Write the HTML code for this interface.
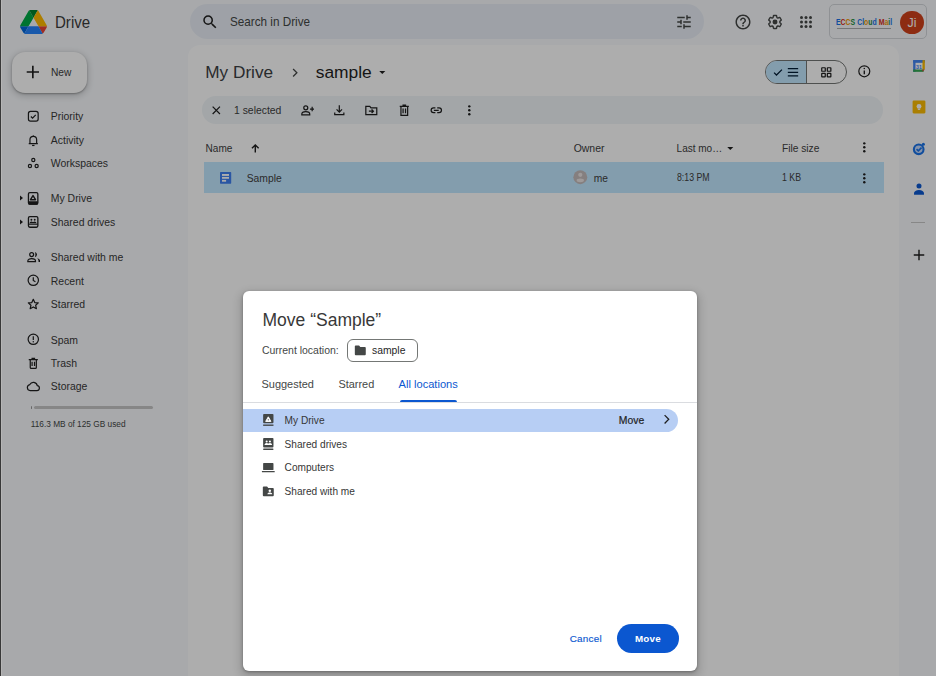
<!DOCTYPE html>
<html><head><meta charset="utf-8">
<style>
*{box-sizing:border-box;margin:0;padding:0}
html,body{width:936px;height:676px;overflow:hidden}
body{position:relative;background:#f8fafd;font-family:"Liberation Sans",sans-serif;color:#1f1f1f}
.a{position:absolute}
.t{position:absolute;white-space:nowrap}
svg{display:block}
.ic{position:absolute}
</style></head><body>

<!-- ===== DRIVE PAGE ===== -->
<div id="page" class="a" style="left:0;top:0;width:936px;height:676px">
  <!-- logo -->
  <svg class="ic" style="left:20px;top:10px" width="27" height="24" viewBox="0 0 87.3 78">
    <path d="m6.6 66.85 3.85 6.65c.8 1.4 1.950 2.5 3.3 3.3l13.75-23.8h-27.5c0 1.55.4 3.1 1.2 4.5z" fill="#0066da"/>
    <path d="m43.65 25-13.750-23.8c-1.35.8-2.5 1.9-3.3 3.3l-25.4 44a9.06 9.06 0 0 0 -1.2 4.5h27.5z" fill="#00ac47"/>
    <path d="m73.55 76.8c1.35-.8 2.5-1.9 3.3-3.3l1.6-2.75 7.65-13.25c.8-1.4 1.2-2.950 1.2-4.5h-27.502l5.852 11.5z" fill="#ea4335"/>
    <path d="m43.65 25 13.75-23.8c-1.35-.8-2.9-1.2-4.5-1.2h-18.5c-1.6 0-3.15.45-4.5 1.2z" fill="#00832d"/>
    <path d="m59.8 53h-32.3l-13.75 23.8c1.35.8 2.9 1.2 4.5 1.2h50.8c1.6 0 3.15-.45 4.5-1.2z" fill="#2684fc"/>
    <path d="m73.4 26.5-12.7-22c-.8-1.4-1.95-2.5-3.3-3.3l-13.75 23.8 16.150 28h27.45c0-1.55-.4-3.1-1.2-4.5z" fill="#ffba00"/>
  </svg>
  <div class="t" style="left:54.6px;top:10.6px;font-size:16.2px;line-height:22px;color:#3c3c3c;transform:scaleX(.93);transform-origin:0 0">Drive</div>

  <!-- search -->
  <div class="a" style="left:190px;top:4px;width:514px;height:35px;border-radius:18px;background:#e9eef6"></div>
  <svg class="ic" style="left:201px;top:13px" width="18" height="18" viewBox="0 0 24 24"><path fill="#1f1f1f" d="M15.5 14h-.79l-.28-.27A6.471 6.471 0 0 0 16 9.5 6.5 6.5 0 1 0 9.5 16c1.61 0 3.09-.59 4.23-1.570l.27.28v.79l5 4.99L20.490 19l-4.99-5zm-6 0C7.01 14 5 11.99 5 9.5S7.01 5 9.5 5 14 7.01 14 9.5 11.99 14 9.5 14z"/></svg>
  <div class="t" style="left:230.2px;top:15.1px;font-size:12.6px;line-height:15px;color:#444746;transform:scaleX(.93);transform-origin:0 0">Search in Drive</div>
  <svg class="ic" style="left:675px;top:13px" width="18" height="18" viewBox="0 0 24 24"><path fill="#444746" d="M3 17v2h6v-2H3zM3 5v2h10V5H3zm10 16v-2h8v-2h-8v-2h-2v6h2zM7 9v2H3v2h4v2h2V9H7zm14 4v-2H11v2h10zm-6-4h2V7h4V5h-4V3h-2v6z"/></svg>

  <!-- header right icons -->
  <svg class="ic" style="left:734px;top:13px" width="18" height="18" viewBox="0 0 24 24"><path fill="#444746" d="M11 18h2v-2h-2v2zm1-16C6.48 2 2 6.48 2 12s4.48 10 10 10 10-4.48 10-10S17.52 2 12 2zm0 18c-4.41 0-8-3.59-8-8s3.590-8 8-8 8 3.59 8 8-3.59 8-8 8zm0-14c-2.21 0-4 1.79-4 4h2c0-1.1.9-2 2-2s2 .9 2 2c0 2-3 1.75-3 5h2c0-2.25 3-2.5 3-5 0-2.21-1.79-4-4-4z"/></svg>
  <svg class="ic" style="left:766px;top:13px" width="18" height="18" viewBox="0 0 24 24"><path fill="none" stroke="#444746" stroke-width="2" stroke-linejoin="round" transform="translate(12 12) scale(.9) translate(-12 -12)" d="M19.14 12.94c.04-.3.06-.61.06-.94 0-.32-.02-.64-.07-.94l2.03-1.58a.49.49 0 0 0 .12-.61l-1.92-3.32a.488.488 0 0 0-.59-.22l-2.39.96c-.5-.38-1.03-.7-1.620-.94l-.36-2.54a.484.484 0 0 0-.48-.41h-3.84c-.24 0-.43.17-.47.41l-.36 2.54c-.59.24-1.13.57-1.62.94l-2.39-.96c-.22-.08-.47 0-.59.22L2.74 8.87c-.12.21-.08.47.12.61l2.03 1.58c-.05.3-.09.63-.09.94s.02.64.07.94l-2.03 1.58a.49.49 0 0 0-.12.61l1.92 3.32c.12.22.37.29.59.22l2.39-.96c.5.38 1.03.7 1.62.94l.36 2.54c.05.24.24.41.48.41h3.84c.24 0 .44-.17.47-.41l.36-2.54c.59-.24 1.13-.56 1.62-.94l2.39.96c.22.08.47 0 .59-.22l1.92-3.32c.12-.22.07-.47-.12-.61l-2.01-1.58z"/><circle cx="12" cy="12" r="3.3" fill="#444746"/></svg>
  <svg class="ic" style="left:797px;top:13px" width="18" height="18" viewBox="0 0 24 24"><g fill="#444746"><circle cx="6" cy="6" r="2"/><circle cx="12" cy="6" r="2"/><circle cx="18" cy="6" r="2"/><circle cx="6" cy="12" r="2"/><circle cx="12" cy="12" r="2"/><circle cx="18" cy="12" r="2"/><circle cx="6" cy="18" r="2"/><circle cx="12" cy="18" r="2"/><circle cx="18" cy="18" r="2"/></g></svg>

  <!-- account box -->
  <div class="a" style="left:829.3px;top:4.3px;width:98px;height:35px;border-radius:5px;border:1px solid #d3d6da;background:#f8fafd"></div>
  <div class="t" style="left:836px;top:16.1px;font-size:9.9px;line-height:11px;font-weight:700;transform:scaleX(0.70);transform-origin:0 0"><span style="color:#1a73e8">E</span><span style="color:#d93025">C</span><span style="color:#f29900">C</span><span style="color:#1e8e3e">S</span> <span style="color:#1a73e8">C</span><span style="color:#1a73e8">l</span><span style="color:#f29900">o</span><span style="color:#1e8e3e">u</span><span style="color:#1a73e8">d</span> <span style="color:#d93025">M</span><span style="color:#f29900">a</span><span style="color:#1e8e3e">i</span><span style="color:#1a73e8">l</span></div>
  <div class="a" style="left:836.5px;top:27.6px;width:54.5px;height:1.4px;background:#6d6d6d;opacity:.55"></div>
  <div class="a" style="left:900px;top:10.5px;width:23.6px;height:23.5px;border-radius:50%;background:#d0421b"></div>
  <div class="t" style="left:900px;top:16.3px;width:24px;text-align:center;font-size:12.4px;line-height:15px;color:#fff">Ji</div>

  <!-- New button -->
  <div class="a" style="left:12px;top:52px;width:75px;height:40.5px;border-radius:13px;background:#fff;box-shadow:0 1px 2px rgba(0,0,0,.3),0 2px 6px 2px rgba(0,0,0,.15)"></div>
  <svg class="ic" style="left:24px;top:63px" width="18" height="18" viewBox="24 63 18 18"><path d="M32.85 65.8v12.4M26.7 72h12.3" stroke="#1f1f1f" stroke-width="1.65"/></svg>
  <div class="t" style="left:51px;top:66px;font-size:10.2px;line-height:14px;color:#404040">New</div>

  <!-- nav -->
  <div id="nav">
  <svg class="ic" style="left:25.7px;top:109.1px" width="14.6" height="14.6" viewBox="0 0 24 24"><rect x="4" y="4" width="16" height="16" rx="3.5" fill="none" stroke="#1f1f1f" stroke-width="2"/><path d="M8 12.3l2.8 2.7 5.2-5.4" fill="none" stroke="#1f1f1f" stroke-width="2"/></svg>
  <div class="t" style="left:50.8px;top:110.4px;font-size:10.45px;line-height:14px;color:#383838">Priority</div>
  <svg class="ic" style="left:25.7px;top:132.7px" width="14.6" height="14.6" viewBox="0 0 24 24"><path d="M6.5 17.5V11a5.5 5.5 0 0 1 11 0v6.5M4.5 17.5h15" fill="none" stroke="#1f1f1f" stroke-width="2"/><path d="M10 20.5h4" fill="none" stroke="#1f1f1f" stroke-width="2"/><circle cx="12" cy="4.5" r="1" fill="#1f1f1f"/></svg>
  <div class="t" style="left:50.8px;top:134.0px;font-size:10.45px;line-height:14px;color:#383838">Activity</div>
  <svg class="ic" style="left:25.7px;top:155.9px" width="14.6" height="14.6" viewBox="0 0 24 24"><circle cx="12" cy="6.5" r="2.6" fill="none" stroke="#1f1f1f" stroke-width="2"/><circle cx="6.5" cy="16.5" r="2.6" fill="none" stroke="#1f1f1f" stroke-width="2"/><circle cx="17.5" cy="16.5" r="2.6" fill="none" stroke="#1f1f1f" stroke-width="2"/></svg>
  <div class="t" style="left:50.8px;top:157.2px;font-size:10.45px;line-height:14px;color:#383838">Workspaces</div>
  <svg class="ic" style="left:25px;top:188px" width="17" height="20" viewBox="25 188 17 20"><rect x="28.45" y="192.65" width="9.4" height="11.5" rx="1.4" fill="none" stroke="#1f1f1f" stroke-width="1.3"/><rect x="28.4" y="201.2" width="9.5" height="3.5" rx=".8" fill="#1f1f1f"/><path d="M33 195.6l2.5 4.1h-5z" fill="none" stroke="#1f1f1f" stroke-width="1.45" stroke-linejoin="round"/></svg>
  <div class="t" style="left:50.8px;top:192.4px;font-size:10.45px;line-height:14px;color:#383838">My Drive</div>
  <svg class="ic" style="left:18.5px;top:195.4px" width="5" height="6" viewBox="0 0 5 6"><path d="M1 0.5l3 2.5-3 2.5z" fill="#1f1f1f"/></svg>
  <svg class="ic" style="left:25px;top:212px" width="17" height="20" viewBox="25 212 17 20"><rect x="28.45" y="216.65" width="9.4" height="10.6" rx="1.4" fill="none" stroke="#1f1f1f" stroke-width="1.3"/><path d="M28.5 224.2h9.3" stroke="#1f1f1f" stroke-width="1.1"/><circle cx="31.4" cy="219.7" r=".95" fill="#1f1f1f"/><circle cx="34.7" cy="219.7" r=".95" fill="#1f1f1f"/><path d="M29.5 223.3a1.95 1.9 0 0 1 3.9 0zM32.6 223.3a1.95 1.9 0 0 1 3.9 0z" fill="#1f1f1f"/></svg>
  <div class="t" style="left:50.8px;top:215.9px;font-size:10.45px;line-height:14px;color:#383838">Shared drives</div>
  <svg class="ic" style="left:18.5px;top:218.9px" width="5" height="6" viewBox="0 0 5 6"><path d="M1 0.5l3 2.5-3 2.5z" fill="#1f1f1f"/></svg>
  <svg class="ic" style="left:25.7px;top:249.9px" width="14.6" height="14.6" viewBox="0 0 24 24"><circle cx="9.3" cy="7.6" r="3.2" fill="none" stroke="#1f1f1f" stroke-width="2"/><path d="M3 19.2v-1.1c0-2.3 2.9-4 6.3-4s6.3 1.7 6.3 4v1.1z" fill="none" stroke="#1f1f1f" stroke-width="2"/><path d="M14.6 3.3a4.4 4.4 0 0 1 0 8.6a12 12 0 0 0 0-8.6z" fill="#1f1f1f"/><path d="M18.2 13.6c2.9.8 5.1 2.4 5.1 4.7v1.6h-2.7v-1.6c0-1.9-1-3.4-2.4-4.7z" fill="#1f1f1f"/></svg>
  <div class="t" style="left:50.8px;top:251.2px;font-size:10.45px;line-height:14px;color:#383838">Shared with me</div>
  <svg class="ic" style="left:25.7px;top:273.2px" width="14.6" height="14.6" viewBox="0 0 24 24"><circle cx="12" cy="12" r="8.5" fill="none" stroke="#1f1f1f" stroke-width="2"/><path d="M12 7v5.3l3.5 2.2" fill="none" stroke="#1f1f1f" stroke-width="2"/></svg>
  <div class="t" style="left:50.8px;top:274.5px;font-size:10.45px;line-height:14px;color:#383838">Recent</div>
  <svg class="ic" style="left:25.7px;top:296.9px" width="14.6" height="14.6" viewBox="0 0 24 24"><path d="M12 3.8l2.4 5.3 5.8.6-4.3 3.9 1.2 5.7L12 16.4l-5.1 2.9 1.2-5.7-4.3-3.9 5.8-.6z" fill="none" stroke="#1f1f1f" stroke-width="2" stroke-linejoin="round"/></svg>
  <div class="t" style="left:50.8px;top:298.2px;font-size:10.45px;line-height:14px;color:#383838">Starred</div>
  <svg class="ic" style="left:25.7px;top:332.4px" width="14.6" height="14.6" viewBox="0 0 24 24"><circle cx="12" cy="12" r="8.5" fill="none" stroke="#1f1f1f" stroke-width="2"/><path d="M12 7v6" fill="none" stroke="#1f1f1f" stroke-width="2"/><circle cx="12" cy="16.2" r="1.2" fill="#1f1f1f"/></svg>
  <div class="t" style="left:50.8px;top:333.7px;font-size:10.45px;line-height:14px;color:#383838">Spam</div>
  <svg class="ic" style="left:25.7px;top:355.5px" width="14.6" height="14.6" viewBox="0 0 24 24"><path d="M4.5 6h15M9 4h6M7 6v13a1.5 1.5 0 0 0 1.5 1.5h7A1.5 1.5 0 0 0 17 19V6M10 9.5v7M14 9.5v7" fill="none" stroke="#1f1f1f" stroke-width="2"/></svg>
  <div class="t" style="left:50.8px;top:356.8px;font-size:10.45px;line-height:14px;color:#383838">Trash</div>
  <svg class="ic" style="left:25.7px;top:379.1px" width="14.6" height="14.6" viewBox="0 0 24 24"><path d="M7 19h11a4 4 0 0 0 .5-7.97A6.5 6.5 0 0 0 6.3 9.1 5 5 0 0 0 7 19z" fill="none" stroke="#1f1f1f" stroke-width="2" stroke-linejoin="round"/></svg>
  <div class="t" style="left:50.8px;top:380.4px;font-size:10.45px;line-height:14px;color:#383838">Storage</div>
  <div class="a" style="left:33.6px;top:405.6px;width:119.8px;height:3px;border-radius:1.5px;background:#c6c6c6"></div>
  <div class="a" style="left:30.8px;top:405.6px;width:1.4px;height:3px;border-radius:1px;background:#9a9a9a"></div>
  <div class="t" style="left:30.7px;top:418.4px;font-size:8.3px;line-height:12px;color:#444746">116.3 MB of 125 GB used</div>
  </div><!--/nav-->

  <!-- main panel -->
  <div class="a" style="left:188px;top:44.5px;width:710.5px;height:640px;border-radius:12px 12px 0 0;background:#fff"></div>
  <div class="t" style="left:205.3px;top:61px;font-size:17.2px;line-height:22px;color:#3c4043">My Drive</div>
  <svg class="ic" style="left:287.5px;top:64.5px" width="14.6" height="14.6" viewBox="0 0 24 24"><path d="M8.4 6.6l6.2 6.1-6.2 6.2" fill="none" stroke="#444746" stroke-width="2.1"/></svg>
  <div class="t" style="left:315.7px;top:61px;font-size:17.4px;line-height:22px;color:#1f1f1f">sample</div>
  <svg class="ic" style="left:375.2px;top:64.7px" width="14.6" height="14.6" viewBox="0 0 24 24"><path d="M7 10l5 5 5-5z" fill="#1f1f1f"/></svg>

  <!-- view toggle -->
  <div class="a" style="left:765.2px;top:60px;width:81.6px;height:23.7px;border-radius:12px;border:1px solid #747775;overflow:hidden">
    <div class="a" style="left:0;top:0;width:40.2px;height:100%;background:#c2e7ff"></div>
    <div class="a" style="left:40.2px;top:0;width:1px;height:100%;background:#747775"></div>
  </div>
  <svg class="ic" style="left:771px;top:64.5px" width="14.6" height="14.6" viewBox="0 0 24 24"><path d="M5 12.5l4 4 9-9" fill="none" stroke="#001d35" stroke-width="2"/></svg>
  <svg class="ic" style="left:786px;top:64.5px" width="14.6" height="14.6" viewBox="0 0 24 24"><path d="M3 6h17M3 12h17M3 18h17" fill="none" stroke="#001d35" stroke-width="2.2"/></svg>
  <svg class="ic" style="left:818.5px;top:64.7px" width="14.6" height="14.6" viewBox="0 0 24 24"><g fill="none" stroke="#1f1f1f" stroke-width="2"><rect x="4.5" y="4.5" width="5.8" height="5.8" rx=".6"/><rect x="13.7" y="4.5" width="5.8" height="5.8" rx=".6"/><rect x="4.5" y="13.7" width="5.8" height="5.8" rx=".6"/><rect x="13.7" y="13.7" width="5.8" height="5.8" rx=".6"/></g></svg>
  <svg class="ic" style="left:856.7px;top:64.3px" width="14.6" height="14.6" viewBox="0 0 24 24"><circle cx="12" cy="12" r="9" fill="none" stroke="#1f1f1f" stroke-width="2"/><path d="M12 10.5v6.5" stroke="#1f1f1f" stroke-width="2.2"/><circle cx="12" cy="7.5" r="1.3" fill="#1f1f1f"/></svg>

  <!-- selection toolbar -->
  <div class="a" style="left:202.2px;top:96.4px;width:681.3px;height:28px;border-radius:14px;background:#f0f5f8"></div>
  <svg class="ic" style="left:209px;top:103.1px" width="14.6" height="14.6" viewBox="0 0 24 24"><path d="M6 6l12 12M18 6L6 18" fill="none" stroke="#1f1f1f" stroke-width="2"/></svg>
  <div class="t" style="left:234px;top:103.8px;font-size:10.4px;line-height:14px;color:#404040">1 selected</div>
  <svg class="ic" style="left:299.7px;top:103.1px" width="14.6" height="14.6" viewBox="0 0 24 24"><g fill="none" stroke="#1f1f1f" stroke-width="2"><circle cx="9.5" cy="8" r="3.3"/><path d="M3 19.5v-1.3c0-2.4 2.9-4 6.5-4s6.5 1.6 6.5 4v1.3z"/><path d="M20 6.3v7.2M16.4 9.9h7.2"/></g></svg>
  <svg class="ic" style="left:332.1px;top:103.1px" width="14.6" height="14.6" viewBox="0 0 24 24"><g fill="none" stroke="#1f1f1f" stroke-width="2"><path d="M12 3.5v11M7.5 10.5l4.5 4.5 4.5-4.5"/><path d="M4.5 15.5v3.5h15v-3.5"/></g></svg>
  <svg class="ic" style="left:363.7px;top:103.1px" width="14.6" height="14.6" viewBox="0 0 24 24"><g fill="none" stroke="#1f1f1f" stroke-width="2"><path d="M3 5.5v13.5h18V8H11.5L9.5 5.5z"/><path d="M8 13.5h7M12.5 10.5l3 3-3 3"/></g></svg>
  <svg class="ic" style="left:396.7px;top:103.1px" width="14.6" height="14.6" viewBox="0 0 24 24"><g fill="none" stroke="#1f1f1f" stroke-width="2"><path d="M4.5 5.5h15M9 3.5h6M6.5 5.5v15h11v-15M10 9v8M14 9v8"/></g></svg>
  <svg class="ic" style="left:428.7px;top:103.1px" width="14.6" height="14.6" viewBox="0 0 24 24"><g fill="none" stroke="#1f1f1f" stroke-width="2"><path d="M10.5 8H7.5a4 4 0 0 0 0 8h3M13.5 8h3a4 4 0 0 1 0 8h-3M8 12h8"/></g></svg>
  <svg class="ic" style="left:461.8px;top:103.1px" width="14.6" height="14.6" viewBox="0 0 24 24"><g fill="#1f1f1f"><circle cx="12" cy="5.5" r="2"/><circle cx="12" cy="12" r="2"/><circle cx="12" cy="18.5" r="2"/></g></svg>

  <!-- table header -->
  <div class="t" style="left:205.6px;top:141.5px;font-size:10.05px;line-height:14px;color:#404040">Name</div>
  <svg class="ic" style="left:247.7px;top:140.7px" width="14.6" height="14.6" viewBox="0 0 24 24"><path d="M12 19V6.5M6.5 12L12 6.5l5.5 5.5" fill="none" stroke="#1f1f1f" stroke-width="2.3"/></svg>
  <div class="t" style="left:573.7px;top:141.5px;font-size:10.46px;line-height:14px;color:#404040">Owner</div>
  <div class="t" style="left:676.6px;top:141.5px;font-size:10.0px;line-height:14px;color:#404040">Last mo…</div>
  <svg class="ic" style="left:722.7px;top:140.7px" width="14.6" height="14.6" viewBox="0 0 24 24"><path d="M7 10l5 5 5-5z" fill="#1f1f1f"/></svg>
  <div class="t" style="left:781.9px;top:141.5px;font-size:10.22px;line-height:14px;color:#404040">File size</div>
  <svg class="ic" style="left:856.7px;top:140.2px" width="14.6" height="14.6" viewBox="0 0 24 24"><g fill="#1f1f1f"><circle cx="12" cy="5.5" r="2"/><circle cx="12" cy="12" r="2"/><circle cx="12" cy="18.5" r="2"/></g></svg>
  

  <!-- selected row -->
  <div class="a" style="left:204.2px;top:162px;width:679.6px;height:30.5px;background:#c2e7ff"></div>
  <svg class="ic" style="left:218px;top:170px" width="16" height="16" viewBox="218 170 16 16"><rect x="220" y="172.1" width="11.2" height="11.6" rx=".6" fill="#3f7ff0"/><rect x="222" y="174" width="7" height="1.9" fill="#fff"/><rect x="222" y="176.95" width="7" height="1.8" fill="#fff"/><rect x="222" y="179.9" width="4.1" height="1.8" fill="#fff"/></svg>
  <div class="t" style="left:246.7px;top:171.6px;font-size:10.32px;line-height:14px;color:#404040">Sample</div>
  <svg class="ic" style="left:572px;top:169px" width="17" height="17" viewBox="572 169 17 17"><circle cx="580.3" cy="177.2" r="6.95" fill="#c4bcbc"/><circle cx="580.3" cy="174.8" r="2.1" fill="#e9e3e3"/><ellipse cx="580.3" cy="180.3" rx="3.7" ry="1.9" fill="#e9e3e3"/></svg>
  <div class="t" style="left:593.8px;top:171.5px;font-size:10.22px;line-height:14px;color:#404040">me</div>
  <div class="t" style="left:676.6px;top:171.3px;font-size:10.3px;line-height:14px;transform:scaleX(.85);transform-origin:0 0;color:#404040">8:13 PM</div>
  <div class="t" style="left:781.9px;top:171.3px;font-size:10.3px;line-height:14px;transform:scaleX(.855);transform-origin:0 0;color:#404040">1 KB</div>
  <svg class="ic" style="left:856.7px;top:170.6px" width="14.6" height="14.6" viewBox="0 0 24 24"><g fill="#1f1f1f"><circle cx="12" cy="5.5" r="2"/><circle cx="12" cy="12" r="2"/><circle cx="12" cy="18.5" r="2"/></g></svg>

  <!-- right side panel icons -->
  <div id="side">
  
  <svg class="ic" style="left:912px;top:59px" width="14" height="14" viewBox="0 0 24 24"><path d="M18 2H6L2 6v12l4 4h12l4-4V6z" fill="#fff"/><path d="M2 6h20V2H6z" fill="#1967d2" transform=""/><rect x="2" y="2" width="20" height="4" fill="#4285f4"/><rect x="2" y="2" width="4" height="20" fill="#4285f4"/><rect x="18" y="2" width="4" height="16" fill="#fbbc04"/><rect x="2" y="18" width="18" height="4" fill="#34a853"/><path d="M18 18h4l-4 4z" fill="#ea4335"/><text x="12" y="16.5" font-size="9" text-anchor="middle" fill="#4285f4" font-family="Liberation Sans" font-weight="700">31</text></svg>
  <svg class="ic" style="left:912px;top:100px" width="14" height="14" viewBox="0 0 24 24"><rect x="1" y="1" width="22" height="22" rx="2" fill="#fbbc04"/><circle cx="12" cy="11" r="4.2" fill="#fff"/><rect x="10" y="15" width="4" height="2" fill="#fff"/></svg>
  <svg class="ic" style="left:912px;top:141.5px" width="14" height="14" viewBox="0 0 24 24"><circle cx="11.5" cy="12.5" r="8.3" fill="#c6dafc" stroke="#1a73e8" stroke-width="3.6"/><path d="M7.8 12.3l3 3 5.6-5.6" fill="none" stroke="#1a73e8" stroke-width="2.8"/><circle cx="19.5" cy="4" r="2.6" fill="#1a73e8"/></svg>
  <svg class="ic" style="left:912px;top:182px" width="14" height="14" viewBox="0 0 24 24"><circle cx="12" cy="7" r="4.3" fill="#0b57d0"/><path d="M3.5 22v-3c0-3 3.5-5.5 8.5-5.5s8.5 2.5 8.5 5.5v3z" fill="#0b57d0"/></svg>
  <div class="a" style="left:911px;top:222px;width:14px;height:1px;background:#c7c7c7"></div>
  <svg class="ic" style="left:912px;top:248px" width="14" height="14" viewBox="0 0 24 24"><path d="M12 3v18M3 12h18" stroke="#1f1f1f" stroke-width="2.4"/></svg>
  </div><!--/side-->
</div>

<!-- scrim -->
<div class="a" style="left:0;top:0;width:936px;height:676px;background:rgba(0,0,0,.32)"></div>

<!-- window edge -->
<div class="a" style="left:0;top:0;width:1px;height:676px;background:#383838"></div>
<div class="a" style="left:1px;top:0;width:1px;height:676px;background:#b6b6b6"></div>

<!-- ===== DIALOG ===== -->
<div id="dlg" class="a" style="left:243px;top:291px;width:454px;height:380px;border-radius:6px;background:#fff;box-shadow:0 4px 8px 3px rgba(0,0,0,.15),0 1px 3px rgba(0,0,0,.3);overflow:hidden">
  <div class="t" style="left:19.5px;top:17.8px;font-size:17.5px;line-height:22px;color:#383838">Move “Sample”</div>
  <div class="t" style="left:18.9px;top:53.2px;font-size:10.48px;line-height:14px;color:#444746">Current location:</div>
  <div class="a" style="left:104.1px;top:48px;width:70.6px;height:22.5px;border:1px solid #747775;border-radius:6px"></div>
  <svg class="ic" style="left:109.8px;top:51.9px" width="14.6" height="14.6" viewBox="0 0 24 24"><path d="M3 5.5a1.5 1.5 0 0 1 1.5-1.5H10l2 2.5h7.5A1.5 1.5 0 0 1 21 8v10.5a1.5 1.5 0 0 1-1.5 1.5h-15A1.5 1.5 0 0 1 3 18.5z" fill="#444746"/></svg>
  <div class="t" style="left:129px;top:53.2px;font-size:10.36px;line-height:14px;color:#1f1f1f">sample</div>

  <div class="t" style="left:18.5px;top:86px;font-size:10.98px;line-height:14px;color:#444746">Suggested</div>
  <div class="t" style="left:95.4px;top:86px;font-size:10.95px;line-height:14px;color:#444746">Starred</div>
  <div class="t" style="left:155.6px;top:86px;font-size:11.1px;line-height:14px;color:#0b57d0">All locations</div>
  <div class="a" style="left:157px;top:108.6px;width:57px;height:2.4px;border-radius:2px 2px 0 0;background:#0b57d0"></div>
  <div class="a" style="left:0;top:111.3px;width:454px;height:1px;background:#dadce0"></div>

  <div class="a" style="left:0;top:117.9px;width:435.1px;height:23px;border-radius:0 11.5px 11.5px 0;background:#b7cef4"></div>
  <svg class="ic" style="left:17.7px;top:122.1px" width="14.6" height="14.6" viewBox="0 0 24 24"><rect x="3.5" y="1.5" width="17" height="15.4" rx="1.5" fill="#444746"/><rect x="3.5" y="18.9" width="17" height="2.3" fill="#444746"/><path d="M12 6.3l4.3 7.5H7.7z" fill="#fff" stroke="#fff" stroke-width="1.6" stroke-linejoin="round"/><circle cx="12" cy="11.3" r="1.1" fill="#444746"/></svg>
  <div class="t" style="left:41.6px;top:123.4px;font-size:10.14px;line-height:14px;color:#363636">My Drive</div>
  <div class="t" style="left:375.8px;top:122.5px;font-size:10.4px;line-height:14px;color:#1f1f1f;-webkit-text-stroke:.2px #1f1f1f">Move</div>
  <svg class="ic" style="left:416px;top:121.2px" width="14.6" height="14.6" viewBox="0 0 24 24"><path d="M9.2 5.2l6.8 6.8-6.8 6.8" fill="none" stroke="#1f1f1f" stroke-width="2.1"/></svg>

  <svg class="ic" style="left:17.7px;top:146px" width="14.6" height="14.6" viewBox="0 0 24 24"><rect x="3.5" y="1.5" width="17" height="15.6" rx="1.5" fill="#444746"/><rect x="3.5" y="18.9" width="17" height="2.6" rx=".8" fill="#444746"/><circle cx="9.3" cy="7.3" r="1.7" fill="#fff"/><circle cx="14.7" cy="7.3" r="1.7" fill="#fff"/><path d="M5.8 13c0-1.8 1.6-3.2 3.5-3.2s3.5 1.4 3.5 3.2zM11.2 13c0-1.8 1.6-3.2 3.5-3.2s3.5 1.4 3.5 3.2z" fill="#fff"/></svg>
  <div class="t" style="left:41.6px;top:147.3px;font-size:10.14px;line-height:14px;color:#363636">Shared drives</div>

  <svg class="ic" style="left:17.7px;top:169.3px" width="14.6" height="14.6" viewBox="0 0 24 24"><rect x="3.5" y="5" width="17" height="11.5" rx="1" fill="#444746"/><path d="M1.5 19h21" stroke="#444746" stroke-width="2"/></svg>
  <div class="t" style="left:41.6px;top:170.2px;font-size:10.14px;line-height:14px;color:#363636">Computers</div>

  <svg class="ic" style="left:17.7px;top:192.6px" width="14.6" height="14.6" viewBox="0 0 24 24"><path d="M3 5.5a1.5 1.5 0 0 1 1.5-1.5H10l2 2.5h7.5A1.5 1.5 0 0 1 21 8v10.5a1.5 1.5 0 0 1-1.5 1.5h-15A1.5 1.5 0 0 1 3 18.5z" fill="#444746"/><circle cx="14.5" cy="11" r="2" fill="#fff"/><path d="M10.5 17c0-2 1.8-3 4-3s4 1 4 3z" fill="#fff"/></svg>
  <div class="t" style="left:41.6px;top:193.9px;font-size:10.14px;line-height:14px;color:#363636">Shared with me</div>

  <div class="t" style="left:326.7px;top:340.8px;font-size:9.9px;line-height:14px;letter-spacing:.25px;color:#0b57d0;-webkit-text-stroke:.15px #0b57d0">Cancel</div>
  <div class="a" style="left:374px;top:333px;width:62.2px;height:28.8px;border-radius:14.4px;background:#0b57d0"></div>
  <div class="t" style="left:392px;top:340.8px;font-size:9.8px;line-height:14px;letter-spacing:.2px;font-weight:700;color:#fff">Move</div>
</div>

</body></html>
